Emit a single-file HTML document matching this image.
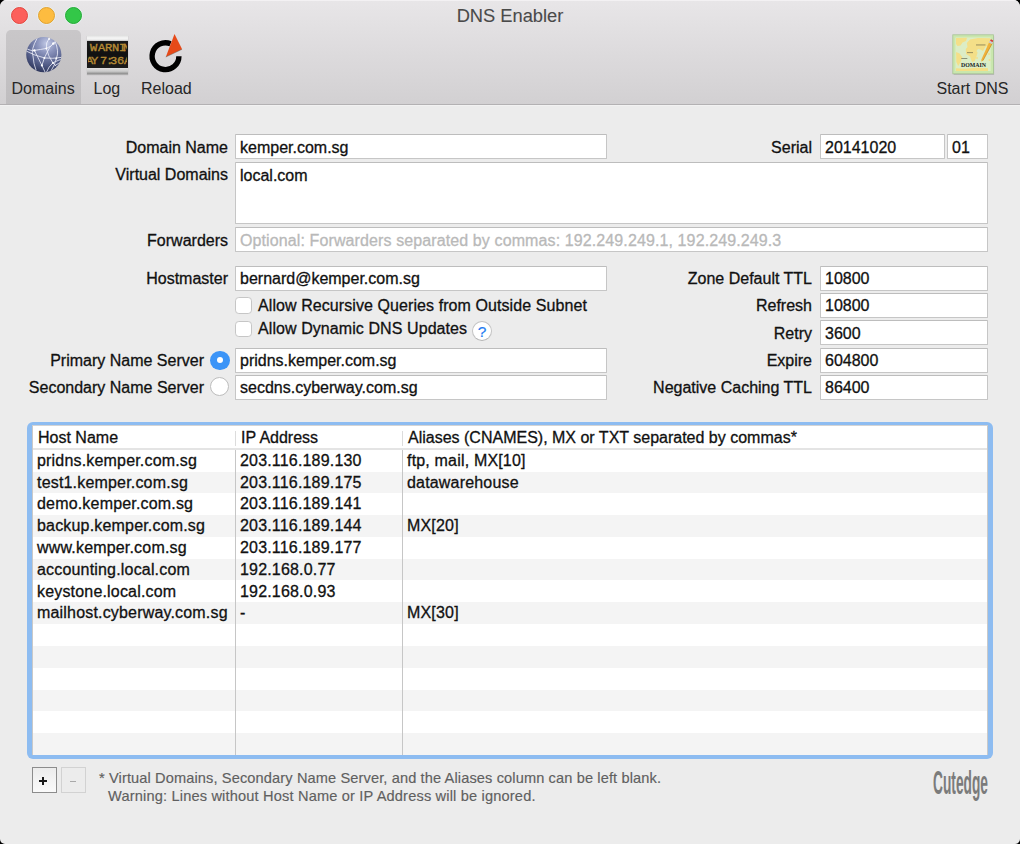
<!DOCTYPE html>
<html><head><meta charset="utf-8">
<style>
html,body{margin:0;padding:0;width:1020px;height:844px;overflow:hidden;background:#000;}
*{box-sizing:border-box;}
#win{position:absolute;left:0;top:0;width:1020px;height:844px;background:#ececec;border-radius:6.5px 6.5px 5px 5px;overflow:hidden;font-family:"Liberation Sans",sans-serif;color:#111;}
#bar{position:absolute;left:0;top:0;width:1020px;height:105px;background:linear-gradient(#e8e6e8,#d2d0d2);border-bottom:1px solid #b3b1b3;}
#bar:before{content:"";position:absolute;left:0;top:0;right:0;height:1px;background:#f3f1f3;}
.tl{position:absolute;top:6.5px;width:17px;height:17px;border-radius:50%;box-shadow:0 0 0 0.8px rgba(235,250,250,0.6);}
.t{position:absolute;font-size:16px;line-height:18px;white-space:nowrap;-webkit-text-stroke:0.3px currentColor;}
.r{text-align:right;}
.f{position:absolute;background:#fff;border:1px solid #c6c6c6;border-top-color:#bdbdbd;border-radius:1px;}
.cb{position:absolute;width:17px;height:16.6px;border:1.4px solid #c6c6c6;border-radius:3.8px;background:#fff;}
.row{position:absolute;left:33px;width:954px;height:21.86px;}
.g{background:#f4f4f4;}
.vl{position:absolute;width:1px;background:#c6c6c6;}
.ct{position:absolute;font-size:16px;line-height:18px;white-space:nowrap;-webkit-text-stroke:0.3px currentColor;letter-spacing:0.18px;}
</style></head><body>
<div id="win">
  <div id="bar"></div>
  <div style="position:absolute;left:0;top:105px;width:1020px;height:1px;background:#f2f2f2;"></div>
  <div class="tl" style="left:10.6px;background:#fc605c;border:1px solid #e2463f;"></div>
  <div class="tl" style="left:37.7px;background:#fdbc40;border:1px solid #e0a030;"></div>
  <div class="tl" style="left:65.2px;background:#33c748;border:1px solid #24a935;"></div>
  <div class="t" style="left:0;width:1020px;top:6px;font-size:18.3px;line-height:20px;text-align:center;color:#4a4a4a;-webkit-text-stroke:0.1px #4a4a4a;">DNS Enabler</div>

  <!-- selected toolbar item -->
  <div style="position:absolute;left:6px;top:30px;width:75px;height:74px;background:linear-gradient(#c9c7c9,#bfbdbf);border-radius:5px 5px 0 0;"></div>

  <!-- globe -->
  <svg style="position:absolute;left:22px;top:34px" width="44" height="42" viewBox="0 0 44 42">
    <defs>
      <radialGradient id="gg" cx="0.58" cy="0.18" r="0.9">
        <stop offset="0" stop-color="#c2c9e6"/>
        <stop offset="0.3" stop-color="#8a93bc"/>
        <stop offset="0.68" stop-color="#525c87"/>
        <stop offset="1" stop-color="#242c50"/>
      </radialGradient>
      <clipPath id="gc"><circle cx="21.8" cy="20.7" r="17.6"/></clipPath>
    </defs>
    <circle cx="21.8" cy="20.7" r="17.6" fill="url(#gg)"/>
    <g clip-path="url(#gc)" fill="none" stroke="#f4f6ff" stroke-width="0.85" opacity="0.9" stroke-linecap="round">
      <path d="M3 13.6 Q9 17.5 12.4 16.4 Q19 15.5 24.4 14.4 Q29 12.5 31.4 9.5 Q34 7 36 5"/>
      <path d="M3 16.5 Q12 21.5 22.4 23.9 Q30 25 40 23.4"/>
      <path d="M12.4 16.4 L19.9 31.4 L23.5 39"/>
      <path d="M31.4 9.5 Q27 13 25.4 17.9 L22.4 23.9 L19.9 31.4"/>
      <path d="M27.1 4.2 Q23.5 9 24.4 14.4 Q26 22 30.9 28.9 L34 32"/>
      <path d="M40 25 Q32 28 30.9 28.9 Q27 32 24 39"/>
      <path d="M15 4.5 Q8.5 16 11 22 Q11.5 30 14 36"/>
      <path d="M33 7 Q37.5 18 34.3 24.4 Q33 31 29 37"/>
      <path d="M40 27 Q36 30 33 31.5"/>
    </g>
    <g fill="#fff">
      <circle cx="12.4" cy="16.4" r="1.2"/><circle cx="24.4" cy="14.4" r="1"/><circle cx="31.4" cy="9.5" r="1.3"/>
      <circle cx="22.4" cy="23.9" r="1"/><circle cx="34.3" cy="24.4" r="1"/><circle cx="19.9" cy="31.4" r="1.1"/>
      <circle cx="30.9" cy="28.9" r="1"/><circle cx="27.1" cy="5" r="0.9"/>
    </g>
  </svg>
  <div class="t" style="left:11.5px;top:79.5px;font-size:16px;color:#262626;-webkit-text-stroke:0px;">Domains</div>

  <!-- log icon -->
  <div style="position:absolute;left:87px;top:35px;width:41px;height:38.5px;background:linear-gradient(#dcdcdc,#f6f6f6 8%,#e4e4e4 14%,#1a1a1a 15%,#111 50%,#1c1c1c 84%,#e0e0e0 85%,#c9c9c9 93%,#8a8a8a);box-shadow:0 1px 1px rgba(0,0,0,.2);"></div>
  <div style="position:absolute;left:87.8px;top:40.7px;width:39.5px;height:26.2px;overflow:hidden;font-family:'Liberation Mono',monospace;color:#b58a34;font-size:10.5px;line-height:10px;"><span style="position:absolute;left:2.6px;top:1.7px;transform:scale(1.15,1.08);transform-origin:0 0;-webkit-text-stroke:0.35px #b58a34">W</span><span style="position:absolute;left:10.5px;top:1.7px;transform:scale(1.15,1.08);transform-origin:0 0;-webkit-text-stroke:0.35px #b58a34">A</span><span style="position:absolute;left:17.6px;top:1.7px;transform:scale(1.15,1.08);transform-origin:0 0;-webkit-text-stroke:0.35px #b58a34">R</span><span style="position:absolute;left:24.1px;top:1.7px;transform:scale(1.15,1.08);transform-origin:0 0;-webkit-text-stroke:0.35px #b58a34">N</span><span style="position:absolute;left:31.0px;top:1.7px;transform:scale(1.15,1.08);transform-origin:0 0;-webkit-text-stroke:0.35px #b58a34">I</span><span style="position:absolute;left:35.0px;top:1.7px;transform:scale(1.15,1.08);transform-origin:0 0;-webkit-text-stroke:0.35px #b58a34">N</span><span style="position:absolute;left:-1.6px;top:14.3px;transform:scale(1.15,1.08);transform-origin:0 0;-webkit-text-stroke:0.35px #b58a34">A</span><span style="position:absolute;left:3.4px;top:14.3px;transform:scale(1.15,1.08);transform-origin:0 0;-webkit-text-stroke:0.35px #b58a34">Y</span><span style="position:absolute;left:11.8px;top:14.3px;transform:scale(1.15,1.08);transform-origin:0 0;-webkit-text-stroke:0.35px #b58a34">7</span><span style="position:absolute;left:17.8px;top:14.3px;transform:scale(1.15,1.08);transform-origin:0 0;-webkit-text-stroke:0.35px #b58a34">:</span><span style="position:absolute;left:21.8px;top:14.3px;transform:scale(1.15,1.08);transform-origin:0 0;-webkit-text-stroke:0.35px #b58a34">3</span><span style="position:absolute;left:28.8px;top:14.3px;transform:scale(1.15,1.08);transform-origin:0 0;-webkit-text-stroke:0.35px #b58a34">6</span><span style="position:absolute;left:35.8px;top:14.3px;transform:scale(1.15,1.08);transform-origin:0 0;-webkit-text-stroke:0.35px #b58a34">A</span></div>
  <div class="t" style="left:93.5px;top:79.5px;font-size:16px;color:#262626;-webkit-text-stroke:0px;">Log</div>

  <!-- reload icon -->
  <svg style="position:absolute;left:144px;top:30px" width="46" height="46" viewBox="0 0 46 46">
    <path d="M26.56 13.79 A13.4 13.4 0 1 0 34.9 26.2" fill="none" stroke="#000" stroke-width="5.4"/>
    <path d="M30.5 4.1 L38.1 19.3 L21.8 27 Z" fill="#e64a19"/>
    <path d="M38.1 19.3 L21.8 27" stroke="#3a5050" stroke-width="0.6" opacity="0.6"/>
  </svg>
  <div class="t" style="left:141px;top:79.5px;font-size:16px;color:#262626;-webkit-text-stroke:0px;">Reload</div>

  <!-- start dns icon -->
  <svg style="position:absolute;left:948px;top:30px" width="50" height="48" viewBox="0 0 50 48">
    <rect x="5" y="5.5" width="40.5" height="38.5" fill="#000" opacity="0.18" transform="translate(0.6,0.8)"/>
    <rect x="4.8" y="4.8" width="40.7" height="39" fill="#c9e7ad"/>
    <rect x="4.8" y="4.8" width="40.7" height="39" fill="none" stroke="#a8c496" stroke-width="0.8"/>
    <rect x="7.4" y="7.4" width="35.3" height="33.6" fill="#dcedc6"/>
    <g fill="#f4df88">
      <path d="M8 8 L19 7.8 L18 11 L14.5 12.5 L12.5 15.5 L9.5 16 L8 14 Z"/>
      <path d="M18.8 13 L22 9.5 L30 8 L42.2 8.2 L41.8 15.5 L37.5 16.5 L35 21 L32.5 19.5 L30 19 L28.5 21 L29.6 22.5 L28.6 26 L26.8 31 L24 32 L22 26.5 L18 24 L17.8 19 L19.5 17 Z"/>
      <path d="M8.1 22 L11.6 23.5 L14.4 27.5 L12.6 32 L10.2 36 L8.3 32 Z"/>
      <path d="M8 38.3 L17 38.8 L28.4 37.8 L40 38.3 L40 41 L8 41 Z"/>
      <circle cx="41" cy="24" r="0.9"/><circle cx="41.5" cy="30" r="1"/><circle cx="29" cy="28" r="0.9"/>
    </g>
    <g fill="#4a4a3a" opacity="0.6">
      <rect x="28" y="14.5" width="9.5" height="0.9"/>
      <rect x="19" y="22.2" width="6" height="0.9"/>
      <rect x="13.3" y="28" width="6" height="0.9"/>
    </g>
    <text x="13.1" y="37" font-family="Liberation Serif" font-weight="bold" font-size="6.4" textLength="25" lengthAdjust="spacingAndGlyphs" fill="#1a1a1a">DOMAIN</text>
    <path d="M41.4 11.6 L44.2 13.4 L35 30.5 L33.5 31.8 L33.3 29.8 Z" fill="#f0b13a"/>
    <path d="M44.2 13.4 L35 30.5" stroke="#c98a20" stroke-width="0.7"/>
    <path d="M40.8 12.4 L42 10.6 L44.5 12.2 L43.9 14 Z" fill="#c9c9d8"/>
    <path d="M42 10.6 L43 9.3 L45.2 10.6 L44.5 12.2 Z" fill="#d83a3a"/>
  </svg>
  <div class="t" style="left:936.5px;top:79.5px;font-size:16px;color:#262626;-webkit-text-stroke:0px;">Start DNS</div>

  <!-- Left labels -->
  <div class="t r" style="right:792px;top:139px;">Domain Name</div>
  <div class="t r" style="right:792px;top:166px;">Virtual Domains</div>
  <div class="t r" style="right:792px;top:232px;">Forwarders</div>
  <div class="t r" style="right:792px;top:270px;">Hostmaster</div>
  <div class="t r" style="right:816px;top:352px;">Primary Name Server</div>
  <div class="t r" style="right:816px;top:379px;">Secondary Name Server</div>

  <!-- Left fields -->
  <div class="f" style="left:235px;top:134px;width:372px;height:25px;"></div>
  <div class="t" style="left:240px;top:139px;">kemper.com.sg</div>
  <div class="f" style="left:235px;top:162px;width:753px;height:62px;"></div>
  <div class="t" style="left:240px;top:167px;">local.com</div>
  <div class="f" style="left:235px;top:227px;width:753px;height:25px;"></div>
  <div class="t" style="left:240px;top:232px;color:#b9b9b9;letter-spacing:0.11px;">Optional: Forwarders separated by commas: 192.249.249.1, 192.249.249.3</div>
  <div class="f" style="left:235px;top:266px;width:372px;height:25px;"></div>
  <div class="t" style="left:240px;top:270px;">bernard@kemper.com.sg</div>

  <div class="cb" style="left:234.5px;top:297.4px;"></div>
  <div class="t" style="left:258px;top:297px;letter-spacing:0.08px;">Allow Recursive Queries from Outside Subnet</div>
  <div class="cb" style="left:234.5px;top:320.8px;"></div>
  <div class="t" style="left:258px;top:320px;letter-spacing:0.08px;">Allow Dynamic DNS Updates</div>
  <div style="position:absolute;left:472px;top:321px;width:20px;height:20px;border-radius:50%;background:#fff;border:1px solid #c3c3c3;border-bottom-color:#b3b3b3;color:#1f7cf2;font-size:15.5px;line-height:19px;text-align:center;-webkit-text-stroke:0.2px #1f7cf2;">?</div>

  <!-- radios -->
  <div style="position:absolute;left:210.2px;top:350.9px;width:19.4px;height:19.2px;border-radius:50%;background:#3b94f7;"></div>
  <div style="position:absolute;left:216.9px;top:357.3px;width:6px;height:6px;border-radius:50%;background:#fff;"></div>
  <div style="position:absolute;left:210.3px;top:376.9px;width:19.2px;height:19.2px;border-radius:50%;background:#fff;border:1.3px solid #bdbdbd;"></div>

  <div class="f" style="left:235px;top:348px;width:372px;height:25px;"></div>
  <div class="t" style="left:240px;top:352px;">pridns.kemper.com.sg</div>
  <div class="f" style="left:235px;top:375px;width:372px;height:25px;"></div>
  <div class="t" style="left:240px;top:379px;">secdns.cyberway.com.sg</div>

  <!-- Right labels -->
  <div class="t r" style="right:208px;top:139px;">Serial</div>
  <div class="f" style="left:820px;top:134px;width:125px;height:25px;"></div>
  <div class="t" style="left:825px;top:139px;">20141020</div>
  <div class="f" style="left:947px;top:134px;width:41px;height:25px;"></div>
  <div class="t" style="left:952px;top:139px;">01</div>

  <div class="t r" style="right:208px;top:270px;">Zone Default TTL</div>
  <div class="t r" style="right:208px;top:297px;">Refresh</div>
  <div class="t r" style="right:208px;top:325px;">Retry</div>
  <div class="t r" style="right:208px;top:352px;">Expire</div>
  <div class="t r" style="right:208px;top:379px;">Negative Caching TTL</div>
  <div class="f" style="left:820px;top:266px;width:168px;height:25px;"></div>
  <div class="t" style="left:825px;top:270px;">10800</div>
  <div class="f" style="left:820px;top:293px;width:168px;height:25px;"></div>
  <div class="t" style="left:825px;top:297px;">10800</div>
  <div class="f" style="left:820px;top:320px;width:168px;height:25px;"></div>
  <div class="t" style="left:825px;top:325px;">3600</div>
  <div class="f" style="left:820px;top:348px;width:168px;height:25px;"></div>
  <div class="t" style="left:825px;top:352px;">604800</div>
  <div class="f" style="left:820px;top:375px;width:168px;height:25px;"></div>
  <div class="t" style="left:825px;top:379px;">86400</div>

  <!-- TABLE -->
  <div id="tbl" style="position:absolute;left:27px;top:422px;width:966px;height:337px;border-radius:6px;background:#8dbcf1;"></div>
  <div style="position:absolute;left:32px;top:425.4px;width:956px;height:329.2px;background:#fff;border:1px solid #c9c9c9;border-top-color:#d4d4d4;overflow:hidden;">
  </div>
  <div id="rows">
<div style="position:absolute;left:33px;top:426px;width:954px;height:328.6px;overflow:hidden;">
<div style="position:absolute;left:0;width:954px;top:45.50px;height:21.8px;background:#f4f4f4;"></div>
<div style="position:absolute;left:0;width:954px;top:89.10px;height:21.8px;background:#f4f4f4;"></div>
<div style="position:absolute;left:0;width:954px;top:132.70px;height:21.8px;background:#f4f4f4;"></div>
<div style="position:absolute;left:0;width:954px;top:176.30px;height:21.8px;background:#f4f4f4;"></div>
<div style="position:absolute;left:0;width:954px;top:219.90px;height:21.8px;background:#f4f4f4;"></div>
<div style="position:absolute;left:0;width:954px;top:263.50px;height:21.8px;background:#f4f4f4;"></div>
<div style="position:absolute;left:0;width:954px;top:307.10px;height:21.8px;background:#f4f4f4;"></div>
</div>
<div style="position:absolute;left:33px;top:448px;width:954px;height:1.5px;background:#e4e4e4;"></div>
<div class="ct" style="left:38px;top:429px;letter-spacing:0;">Host Name</div>
<div class="ct" style="left:241px;top:429px;letter-spacing:0;">IP Address</div>
<div class="ct" style="left:408px;top:429px;letter-spacing:0;">Aliases (CNAMES), MX or TXT separated by commas*</div>
<div class="vl" style="left:235px;top:430.5px;height:15px;background:#dcdcdc;"></div>
<div class="vl" style="left:402px;top:430.5px;height:15px;background:#dcdcdc;"></div>
<div class="vl" style="left:235px;top:449.5px;height:305px;"></div>
<div class="vl" style="left:402px;top:449.5px;height:305px;"></div>
<div class="ct" style="left:37px;top:451.70px;">pridns.kemper.com.sg</div>
<div class="ct" style="left:240px;top:451.70px;">203.116.189.130</div>
<div class="ct" style="left:407px;top:451.70px;">ftp, mail, MX[10]</div>
<div class="ct" style="left:37px;top:473.50px;">test1.kemper.com.sg</div>
<div class="ct" style="left:240px;top:473.50px;">203.116.189.175</div>
<div class="ct" style="left:407px;top:473.50px;">datawarehouse</div>
<div class="ct" style="left:37px;top:495.30px;">demo.kemper.com.sg</div>
<div class="ct" style="left:240px;top:495.30px;">203.116.189.141</div>
<div class="ct" style="left:37px;top:517.10px;">backup.kemper.com.sg</div>
<div class="ct" style="left:240px;top:517.10px;">203.116.189.144</div>
<div class="ct" style="left:407px;top:517.10px;">MX[20]</div>
<div class="ct" style="left:37px;top:538.90px;">www.kemper.com.sg</div>
<div class="ct" style="left:240px;top:538.90px;">203.116.189.177</div>
<div class="ct" style="left:37px;top:560.70px;">accounting.local.com</div>
<div class="ct" style="left:240px;top:560.70px;">192.168.0.77</div>
<div class="ct" style="left:37px;top:582.50px;">keystone.local.com</div>
<div class="ct" style="left:240px;top:582.50px;">192.168.0.93</div>
<div class="ct" style="left:37px;top:604.30px;">mailhost.cyberway.com.sg</div>
<div class="ct" style="left:240px;top:604.30px;">-</div>
<div class="ct" style="left:407px;top:604.30px;">MX[30]</div>
</div>

  <!-- buttons -->
  <div style="position:absolute;left:32px;top:767px;width:25px;height:26px;border:1px solid #8c8c8c;background:linear-gradient(#ececec,#fafafa);"></div>
  <div style="position:absolute;left:38.6px;top:780.2px;width:8.4px;height:1.6px;background:#1a1a1a;"></div><div style="position:absolute;left:42px;top:776.8px;width:1.6px;height:8.4px;background:#1a1a1a;"></div>
  <div style="position:absolute;left:60.5px;top:767px;width:25px;height:26px;border:1px solid #d2d2d2;background:#ececec;"></div>
  <div style="position:absolute;left:70px;top:780.5px;width:5.5px;height:1px;background:#a9a9a9;"></div>

  <div class="t" style="left:99px;top:769px;font-size:14.6px;color:#606060;letter-spacing:0.12px;-webkit-text-stroke:0.15px #606060;">* Virtual Domains, Secondary Name Server, and the Aliases column can be left blank.</div>
  <div class="t" style="left:108px;top:787px;font-size:14.6px;color:#606060;letter-spacing:0.17px;-webkit-text-stroke:0.15px #606060;">Warning: Lines without Host Name or IP Address will be ignored.</div>

  <div style="position:absolute;left:932.5px;top:763px;font-size:33.5px;line-height:40px;font-weight:bold;color:#7b7b7b;transform:scaleX(0.41);transform-origin:0 0;white-space:nowrap;">Cutedge</div>
</div>
</body></html>
